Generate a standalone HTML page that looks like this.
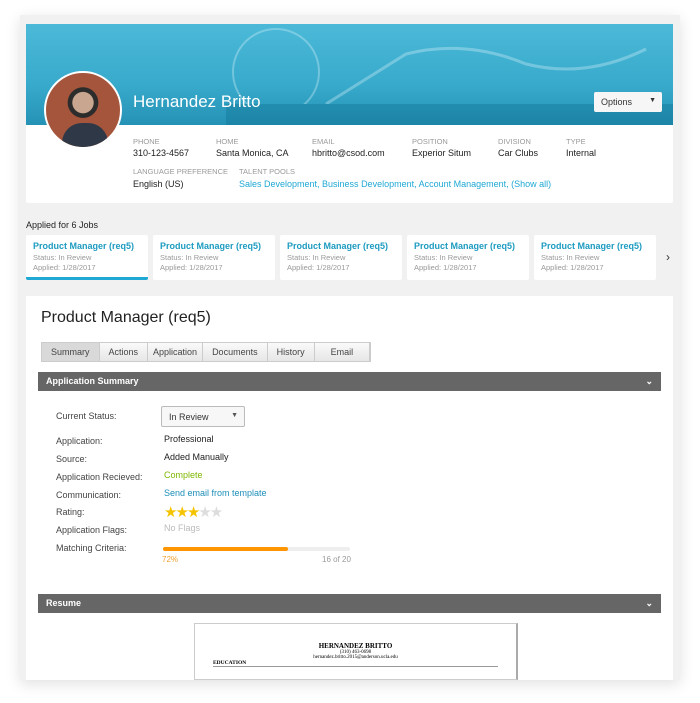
<!DOCTYPE html>
<html><head><meta charset="utf-8"><style>
*{margin:0;padding:0;box-sizing:border-box}
body{width:700px;height:703px;background:#fff;font-family:"Liberation Sans",sans-serif;position:relative;overflow:hidden}
.frame{position:absolute;left:20px;top:15px;width:660px;height:665px;background:#f1f1f2;box-shadow:0 4px 14px rgba(0,0,0,.12)}
.a{position:absolute}
.hdr{left:26px;top:24px;width:647px;height:179px;background:#fff;border-radius:2px}
.ban{left:26px;top:24px;width:647px;height:101px;background:linear-gradient(180deg,#4cb9d8 0%,#38aacb 60%,#2592b5 100%);overflow:hidden}
.lbl{font-size:7.5px;color:#9a9a9a}
.val{font-size:9px;color:#222}
.card{top:235px;width:122px;height:45px;background:#fff;border-radius:2px;padding:6px 7px}
.card b{display:block;font-size:9px;color:#1d9bc0;font-weight:bold;margin-bottom:2px}
.card span{display:block;font-size:7.5px;color:#999;line-height:10px}
.tabs{left:41px;top:342px;height:20px;display:flex;border:1px solid #ccc;background:linear-gradient(#fafafa,#e6e6e6)}
.tabs div{font-size:9px;color:#444;padding:0 9px;line-height:18px;border-right:1px solid #ccc}
.bar{left:38px;width:623px;height:19px;background:#666;color:#fff;font-size:9px;font-weight:bold;padding-left:8px;line-height:19px}
.rl{left:56px;font-size:9px;color:#444}
.rv{left:164px;font-size:9px;color:#222}
</style></head><body>
<div class="frame"></div>
<div class="a hdr"></div>
<div class="a ban">
<svg width="647" height="101" style="position:absolute;left:0;top:0;opacity:.35">
<circle cx="250" cy="48" r="43" fill="none" stroke="#d8f2fa" stroke-width="2"/>
<path d="M300 80 L380 30 Q440 15 500 40 Q560 55 620 25" fill="none" stroke="#d7f2fa" stroke-width="3"/>
<rect x="200" y="80" width="447" height="21" fill="#0d6f90"/>
</svg></div>
<div class="a" style="left:133px;top:92px;font-size:17px;color:#fff">Hernandez Britto</div>
<div class="a" style="left:594px;top:92px;width:68px;height:20px;background:#f6f6f6;border-radius:2px;font-size:9px;color:#333;padding:5px 7px">Options<span style="position:absolute;right:6px;top:5px;font-size:7px">▼</span></div>
<div class="a" style="left:44px;top:71px;width:78px;height:78px;border-radius:50%;background:radial-gradient(circle at 50% 40%,#c9a690 0 18%,#2c2c2c 19% 26%,#a4553b 27%);border:2px solid #fff;overflow:hidden"><div style="position:absolute;left:16px;top:50px;width:46px;height:30px;background:#2f3846;border-radius:20px 20px 0 0"></div></div>
<div class="a lbl" style="left:133px;top:137px">PHONE</div><div class="a val" style="left:133px;top:148px">310-123-4567</div>
<div class="a lbl" style="left:216px;top:137px">HOME</div><div class="a val" style="left:216px;top:148px">Santa Monica, CA</div>
<div class="a lbl" style="left:312px;top:137px">EMAIL</div><div class="a val" style="left:312px;top:148px">hbritto@csod.com</div>
<div class="a lbl" style="left:412px;top:137px">POSITION</div><div class="a val" style="left:412px;top:148px">Experior Situm</div>
<div class="a lbl" style="left:498px;top:137px">DIVISION</div><div class="a val" style="left:498px;top:148px">Car Clubs</div>
<div class="a lbl" style="left:566px;top:137px">TYPE</div><div class="a val" style="left:566px;top:148px">Internal</div>
<div class="a lbl" style="left:133px;top:167px">LANGUAGE PREFERENCE</div><div class="a val" style="left:133px;top:179px">English (US)</div>
<div class="a lbl" style="left:239px;top:167px">TALENT POOLS</div><div class="a val" style="left:239px;top:179px;color:#1fa8d4">Sales Development, Business Development, Account Management, (Show all)</div>
<div class="a" style="left:26px;top:220px;font-size:9px;color:#222">Applied for 6 Jobs</div>
<div class="a card" style="left:26px;border-bottom:3px solid #1fa8d4"><b>Product Manager (req5)</b><span>Status: In Review</span><span>Applied: 1/28/2017</span></div>
<div class="a card" style="left:153px"><b>Product Manager (req5)</b><span>Status: In Review</span><span>Applied: 1/28/2017</span></div>
<div class="a card" style="left:280px"><b>Product Manager (req5)</b><span>Status: In Review</span><span>Applied: 1/28/2017</span></div>
<div class="a card" style="left:407px"><b>Product Manager (req5)</b><span>Status: In Review</span><span>Applied: 1/28/2017</span></div>
<div class="a card" style="left:534px"><b>Product Manager (req5)</b><span>Status: In Review</span><span>Applied: 1/28/2017</span></div>
<div class="a" style="left:666px;top:250px;font-size:12px;color:#333">›</div>
<div class="a" style="left:26px;top:296px;width:647px;height:384px;background:#fff"></div>
<div class="a" style="left:41px;top:309px;font-size:16px;color:#222">Product Manager (req5)</div>
<div class="a tabs"><div style="background:#d9d9d9">Summary</div><div>Actions</div><div style="padding:0 5px">Application</div><div>Documents</div><div>History</div><div style="padding:0 16px">Email</div></div>
<div class="a bar" style="top:372px">Application Summary<span style="position:absolute;right:8px">⌄</span></div>
<div class="a rl" style="top:411px">Current Status:</div>
<div class="a" style="left:161px;top:406px;width:84px;height:21px;border:1px solid #bbb;border-radius:2px;background:#f7f7f7;font-size:9px;color:#333;padding:5px 7px">In Review<span style="position:absolute;right:6px;top:5px;font-size:7px;color:#555">▼</span></div>
<div class="a rl" style="top:436px">Application:</div><div class="a rv" style="top:434px">Professional</div>
<div class="a rl" style="top:454px">Source:</div><div class="a rv" style="top:452px">Added Manually</div>
<div class="a rl" style="top:472px">Application Recieved:</div><div class="a rv" style="top:470px;color:#7fb800">Complete</div>
<div class="a rl" style="top:490px">Communication:</div><div class="a rv" style="top:488px;color:#1d8fb8">Send email from template</div>
<div class="a rl" style="top:507px">Rating:</div><div class="a rv" style="top:503px;font-size:15px;letter-spacing:-2px"><span style="color:#f5c400">★★★</span><span style="color:#ddd">★★</span></div>
<div class="a rl" style="top:525px">Application Flags:</div><div class="a rv" style="top:523px;color:#bbb">No Flags</div>
<div class="a rl" style="top:543px">Matching Criteria:</div>
<div class="a" style="left:163px;top:547px;width:187px;height:4px;background:#eee;border-radius:2px"><div style="width:125px;height:4px;background:#ff9500;border-radius:2px"></div></div>
<div class="a" style="left:162px;top:555px;font-size:8px;color:#f0a030">72%</div>
<div class="a" style="left:322px;top:555px;font-size:8px;color:#999">16 of 20</div>
<div class="a bar" style="top:594px">Resume<span style="position:absolute;right:8px">⌄</span></div>
<div class="a" style="left:194px;top:623px;width:324px;height:57px;border:1px solid #ccc;border-right:2px solid #aaa;background:#fff;font-family:'Liberation Serif',serif;text-align:center">
<div style="margin-top:18px;font-size:7px;font-weight:bold">HERNANDEZ BRITTO</div>
<div style="font-size:5px">(310) 463-0698</div><div style="font-size:5px">hernandez.britto.2015@anderson.ucla.edu</div>
<div style="text-align:left;margin-left:18px;font-size:5.5px;font-weight:bold;border-bottom:1px solid #999;width:285px">EDUCATION</div></div>
</body></html>
